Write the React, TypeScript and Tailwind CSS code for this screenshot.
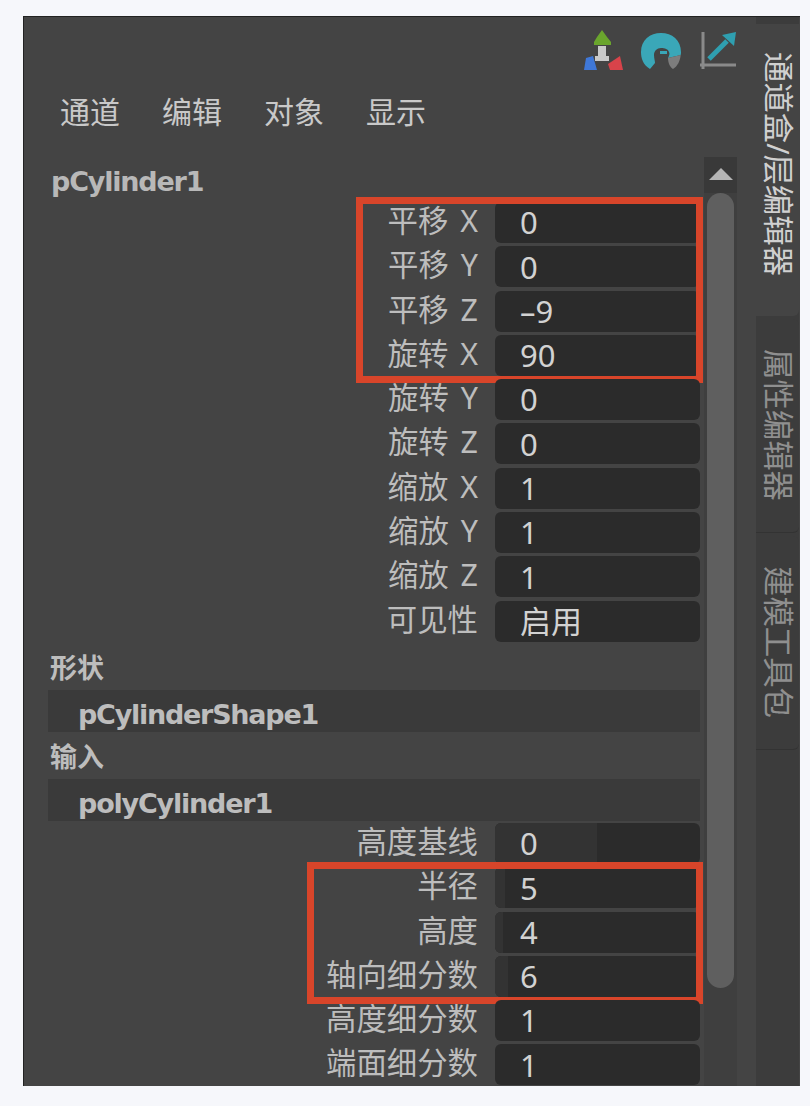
const CJK = '"Noto Sans", "Noto Sans CJK SC", sans-serif';

type Row = { label: string; value: string; fill?: number };

const transformRows: Row[] = [
  { label: "平移 X", value: "0" },
  { label: "平移 Y", value: "0" },
  { label: "平移 Z", value: "–9" },
  { label: "旋转 X", value: "90" },
];
const otherRows: Row[] = [
  { label: "旋转 Y", value: "0" },
  { label: "旋转 Z", value: "0" },
  { label: "缩放 X", value: "1" },
  { label: "缩放 Y", value: "1" },
  { label: "缩放 Z", value: "1" },
  { label: "可见性", value: "启用" },
];
const polyRows: Row[] = [
  { label: "半径", value: "5", fill: 10 },
  { label: "高度", value: "4", fill: 8 },
  { label: "轴向细分数", value: "6", fill: 13 },
];
const polyTail: Row[] = [
  { label: "高度细分数", value: "1" },
  { label: "端面细分数", value: "1" },
];

function AttrRow({ label, value, fill }: Row) {
  return (
    <div className="flex h-[44.3px] shrink-0 items-start">
      <div className="w-[471px] pr-[17px] text-right text-[30.4px] leading-[38px] text-[#bdbdbd] [word-spacing:4px]">{label}</div>
      <div className="relative flex h-[41px] w-[205px] items-center overflow-hidden rounded-md bg-[#2b2b2b] pl-[25px] text-[31px] text-[#d2d2d2]">
        {fill ? <div className="absolute inset-y-0 left-0 bg-[#333333]" style={{ width: fill }} /> : null}
        <span className="relative">{value}</span>
      </div>
    </div>
  );
}

function Highlight({ left }: { left: number }) {
  return (
    <div
      className="absolute -top-[5px] -bottom-[4px] right-[1px] border-[7px] border-[#d8452a]"
      style={{ left }}
    />
  );
}

function MoveIcon() {
  return (
    <svg width="40" height="41" viewBox="0 0 40 41">
      <path d="M19 0l5 7 4 5v3H11v-3l3-5z" fill="#6aa52d" />
      <path d="M3 28l7-2 4 14H1z" fill="#3f78d8" />
      <path d="M37 26l-12 8 2 6h13z" fill="#d8434a" />
      <path d="M15 16h8v10h3v5H12v-5h3z" fill="#c9c9c9" />
    </svg>
  );
}

function RotateIcon() {
  return (
    <svg width="42" height="40" viewBox="0 0 42 40">
      <path d="M10 38C3 34 1 27 1 21 1 9 10 2 21 2s20 7 20 19c0 1 0 2-.3 3L28 27c1-2 2-4 1-6-1-3-4-4-8-4-4 0-7 3-7 7 0 3 1 6 1 8z" fill="#3aa7b8" />
      <path d="M20 20h7v3h-7z" fill="#3aa7b8" />
      <path d="M28 27l12.700-3c-.7 6-3 11-7.700 14-3-2-5-6-5-11z" fill="#7d7d7d" />
    </svg>
  );
}

function ScaleIcon() {
  return (
    <svg width="38" height="40" viewBox="0 0 38 40">
      <path d="M4 1v37M1 34h36" stroke="#8a8a8a" strokeWidth="3" fill="none" />
      <path d="M10 28L28 10" stroke="#2f9fb0" strokeWidth="5" fill="none" />
      <path d="M23 4L37 1l-2 14z" fill="#2f9fb0" />
    </svg>
  );
}

function SideTab({ text, active }: { text: string; active?: boolean }) {
  return (
    <div
      className={
        active
          ? "flex h-[292px] shrink-0 justify-center rounded-br-md bg-[#444444] pt-[28px] text-[#d0d0d0]"
          : "mt-[3px] flex h-[214px] shrink-0 justify-center rounded-r-md border-b border-[#333333] bg-[#3c3c3c] pt-[30px] text-[#8f8f8f]"
      }
    >
      <span className="text-[30.4px] leading-[36px] [text-orientation:sideways] [writing-mode:vertical-rl]">{text}</span>
    </div>
  );
}

export default function App() {
  return (
    <div className="h-[1106px] w-[810px] overflow-hidden bg-[#f6f7fb] pt-[16px] pl-[23px]" style={{ fontFamily: CJK }}>
      <div className="flex h-[1070px] w-[777px] overflow-hidden border-l border-t border-[#222222] bg-[#444444]">
        {/* 왼쪽 */}
        <div className="flex w-[713px] shrink-0 flex-col">
          <div className="flex h-[140px] shrink-0 flex-col">
            <div className="flex h-[54px] items-end justify-end gap-[17px]">
              <MoveIcon />
              <RotateIcon />
              <ScaleIcon />
            </div>
            <div className="mt-[19px] flex gap-[42px] pl-[36px] text-[30px] leading-[44px] text-[#c9c9c9]">
              <span>通道</span>
              <span>编辑</span>
              <span>对象</span>
              <span>显示</span>
            </div>
          </div>

          <div className="flex min-h-0 flex-1">
            <div className="w-[680px] shrink-0">
              <div
                className="h-[45px] pl-[27px] text-[27px] font-bold leading-[50px] text-[#b8b8b8]"
                style={{ fontFamily: '"DejaVu Sans", sans-serif', letterSpacing: "-1.2px" }}
              >
                pCylinder1
              </div>

              <div className="relative">
                {transformRows.map((r) => (
                  <AttrRow key={r.label} {...r} />
                ))}
                <Highlight left={332} />
              </div>
              {otherRows.map((r) => (
                <AttrRow key={r.label} {...r} />
              ))}

              <div className="h-[45px] pl-[26px] text-[27px] font-bold leading-[46px] text-[#bdbdbd]">形状</div>
              <div
                className="ml-[24px] h-[42px] w-[652px] bg-[#3a3a3a] pl-[30px] text-[27px] font-bold leading-[50px] text-[#bdbdbd]"
                style={{ fontFamily: '"DejaVu Sans", sans-serif', letterSpacing: "-1.25px" }}
              >
                pCylinderShape1
              </div>
              <div className="h-[47px] pl-[26px] text-[27px] font-bold leading-[50px] text-[#bdbdbd]">输入</div>
              <div
                className="ml-[24px] h-[42px] w-[652px] bg-[#3a3a3a] pl-[30px] text-[27px] font-bold leading-[50px] text-[#bdbdbd]"
                style={{ fontFamily: '"DejaVu Sans", sans-serif', letterSpacing: "-1.2px" }}
              >
                polyCylinder1
              </div>

              <div className="mt-[2px]">
                <AttrRow label="高度基线" value="0" fill={102} />
              </div>
              <div className="relative">
                {polyRows.map((r) => (
                  <AttrRow key={r.label} {...r} />
                ))}
                <Highlight left={283} />
              </div>
              {polyTail.map((r) => (
                <AttrRow key={r.label} {...r} />
              ))}
            </div>

            {/* 스크롤바 */}
            <div className="w-[33px] shrink-0 bg-[#3f3f3f]">
              <div className="flex h-[36px] justify-center bg-[#393939] pt-[11px]">
                <div className="h-0 w-0 border-x-[12px] border-b-[12px] border-x-transparent border-b-[#b5b5b5]" />
              </div>
              <div className="mx-[3px] h-[795px] rounded-[14px] bg-[#5f5f5f]" />
            </div>
          </div>
        </div>

        <div className="w-[19px] shrink-0 bg-[#444444]" />

        {/* 오른쪽 탭 */}
        <div className="flex w-[43px] shrink-0 flex-col bg-[#3c3c3c] pt-[7px]">
          <SideTab text="通道盒/层编辑器" active />
          <SideTab text="属性编辑器" />
          <SideTab text="建模工具包" />
        </div>
      </div>
    </div>
  );
}
